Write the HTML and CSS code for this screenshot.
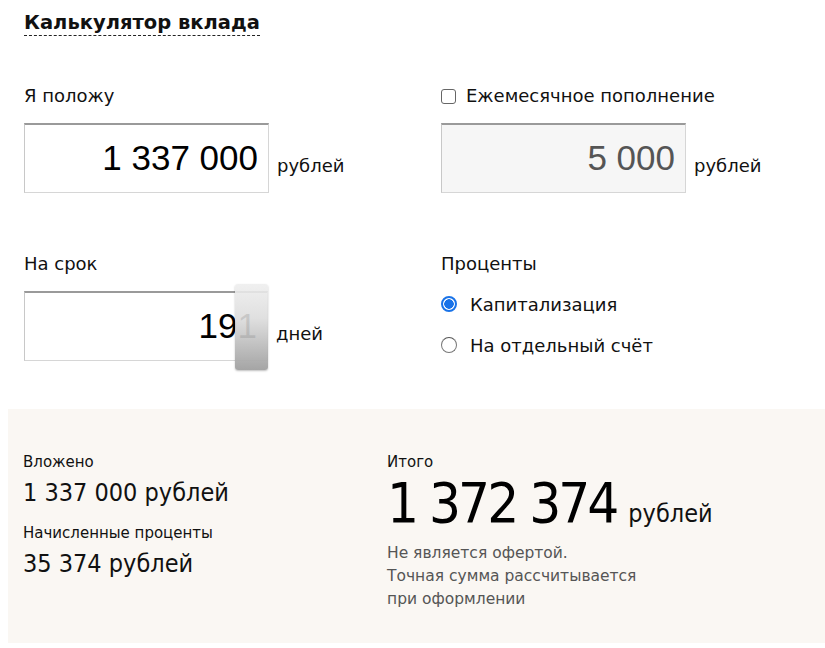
FILE: index.html
```html
<!DOCTYPE html>
<html lang="ru">
<head>
<meta charset="utf-8">
<title>Калькулятор вклада</title>
<link rel="stylesheet" href="styles.css">
</head>
<body>
<div class="calc">
  <h1 class="title"><span>Калькулятор вклада</span></h1>
  <div class="form">
    <div class="field">
      <div class="label">Я положу</div>
      <div class="row">
        <div class="input">1 337 000</div>
        <span class="unit">рублей</span>
      </div>
    </div>
    <div class="field">
      <div class="label"><span class="checkbox"></span>Ежемесячное пополнение</div>
      <div class="row">
        <div class="input disabled">5 000</div>
        <span class="unit">рублей</span>
      </div>
    </div>
    <div class="field">
      <div class="label">На срок</div>
      <div class="row">
        <div class="input term">191<span class="handle"></span></div>
        <span class="unit">дней</span>
      </div>
    </div>
    <div class="field">
      <div class="label">Проценты</div>
      <div class="radios">
        <div class="radio-row"><span class="radio checked"></span>Капитализация</div>
        <div class="radio-row"><span class="radio"></span>На отдельный счёт</div>
      </div>
    </div>
  </div>
  <div class="result">
    <div class="res-col">
      <div class="res-label">Вложено</div>
      <div class="res-value">1 337 000 рублей</div>
      <div class="res-label second">Начисленные проценты</div>
      <div class="res-value">35 374 рублей</div>
    </div>
    <div class="res-col total">
      <div class="res-label">Итого</div>
      <div class="total-value"><span class="big">1 372 374</span><span class="cur">рублей</span></div>
      <div class="note">Не является офертой.<br>Точная сумма рассчитывается<br>при оформлении</div>
    </div>
  </div>
</div>
</body>
</html>
```
FILE: styles.css
```css
html, body {
  margin: 0;
  padding: 0;
  background: #fff;
}
body {
  padding: 8px 0 0 8px;
  font-family: "DejaVu Sans", sans-serif;
  color: #111;
}
.calc {
  width: 817px;
}
.title {
  margin: 0;
  padding: 2px 0 0 16px;
  font-size: 19.5px;
  font-weight: bold;
  line-height: 26px;
  color: #111;
}
.title span {
  border-bottom: 1px dashed #222;
  padding-bottom: 1px;
}
.form {
  display: grid;
  grid-template-columns: 417px 1fr;
  padding: 48px 0 0 16px;
  row-gap: 59px;
}
.label {
  font-size: 18px;
  line-height: 24px;
  height: 24px;
  display: flex;
  align-items: center;
}
.row {
  display: flex;
  align-items: center;
  margin-top: 15px;
}
.input {
  position: relative;
  box-sizing: border-box;
  width: 245px;
  height: 70px;
  border: 1px solid #d6d6d6;
  border-top: 2px solid #9a9a9a;
  border-left-color: #c8c8c8;
  background: #fff;
  font-family: "Liberation Sans", Arial, sans-serif;
  font-size: 35px;
  line-height: 66px;
  text-align: right;
  padding-right: 10px;
  color: #000;
}
.input.disabled {
  background: #f6f6f6;
  color: #555;
}
.input.term {
  width: 244px;
}
.unit {
  font-size: 18px;
  margin-left: 8px;
  margin-top: 14px;
}
.handle {
  position: absolute;
  right: -1px;
  top: -9px;
  width: 33px;
  height: 86px;
  border-radius: 3px;
  background: linear-gradient(to bottom, rgba(238,238,238,0.88) 0%, rgba(220,220,220,0.9) 40%, rgba(160,160,160,0.95) 100%);
  box-shadow: 0 1px 2px rgba(0,0,0,0.25);
}
.checkbox {
  display: inline-block;
  box-sizing: border-box;
  width: 15px;
  height: 15px;
  border: 1px solid #666;
  border-radius: 3px;
  background: #fff;
  margin-right: 10px;
}
.radios {
  display: flex;
  flex-direction: column;
  gap: 17px;
  margin-top: 16px;
}
.radio-row {
  display: flex;
  align-items: center;
  font-size: 18px;
  height: 24px;
}
.radio {
  display: inline-block;
  box-sizing: border-box;
  width: 16px;
  height: 16px;
  border-radius: 50%;
  border: 1.5px solid #777;
  border-top-color: #555;
  margin-right: 13px;
  background: #fff;
}
.radio.checked {
  border: 2px solid #1a73e8;
  background: radial-gradient(circle, #1a73e8 0 4.5px, #fff 5px);
}
.result {
  margin-top: 48px;
  background: #faf7f3;
  height: 234px;
  display: flex;
  padding: 0 0 0 15px;
  box-sizing: border-box;
}
.res-col {
  width: 364px;
  padding-top: 42px;
}
.res-label {
  font-size: 15px;
  line-height: 22px;
}
.res-label.second {
  margin-top: 13px;
}
.res-value {
  font-family: "DejaVu Sans Condensed", "DejaVu Sans", sans-serif;
  font-size: 25px;
  line-height: 32px;
  margin-top: 4px;
}
.total-value {
  display: flex;
  align-items: baseline;
  font-family: "DejaVu Sans Condensed", "DejaVu Sans", sans-serif;
  margin-top: 0;
}
.big {
  font-size: 56px;
  line-height: 60px;
  letter-spacing: -3px;
  color: #000;
}
.cur {
  font-size: 25px;
  margin-left: 12px;
}
.note {
  margin-top: 9px;
  font-size: 15.5px;
  line-height: 23px;
  color: #555;
}
```
